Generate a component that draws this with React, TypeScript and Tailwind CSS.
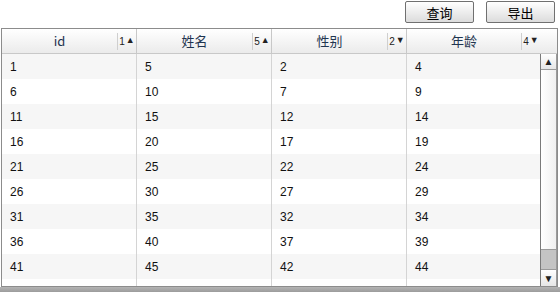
const columns = [
  { label: 'id', sort: '1', dir: '▲' },
  { label: '姓名', sort: '5', dir: '▲' },
  { label: '性别', sort: '2', dir: '▼' },
  { label: '年龄', sort: '4', dir: '▼' },
];

const rows = Array.from({ length: 9 }, (_, i) => [1, 5, 2, 4].map(n => n + i * 5));

const colWidths = ['w-[135px]', 'w-[135px]', 'w-[135px]', 'w-[133px]'];

function ToolButton({ label }: { label: string }) {
  return (
    <button className="w-[69px] h-[22px] rounded-[2px] border border-[#707070] bg-gradient-to-b from-white to-[#dcdcdc] text-[13px] leading-none text-black font-['Noto_Sans_CJK_SC',sans-serif]">
      {label}
    </button>
  );
}

export default function App() {
  return (
    <div className="w-[560px] h-[292px] bg-white flex flex-col font-['Liberation_Sans','Noto_Sans_CJK_SC',sans-serif]">
      {/* Toolbar */}
      <div className="h-[28px] flex justify-end items-start pt-[1px] pr-[5px] gap-[12px]">
        <ToolButton label="查询" />
        <ToolButton label="导出" />
      </div>

      {/* Grid */}
      <div className="ml-[1px] w-[557px] h-[259px] border border-[#8c8c8c] flex flex-col">
        {/* Header */}
        <div className="h-[25px] flex border-b border-[#c8c8c8] bg-gradient-to-b from-white to-[#ebebeb]">
          {columns.map((c, i) => (
            <div
              key={c.label}
              className={`${colWidths[i]} flex items-center ${i < 3 ? 'border-r border-[#c8c8c8]' : ''}`}
            >
              <div className="flex-1 text-center text-[13px] text-[#1f3550] font-['Noto_Sans_CJK_SC',sans-serif]">
                {c.label}
              </div>
              <div className="w-[19px] h-[17px] border-l border-[#cfcfcf] flex items-center justify-center gap-[1px] text-[10px] text-[#222]">
                <span>{c.sort}</span>
                <span className="text-[9px]">{c.dir}</span>
              </div>
            </div>
          ))}
          <div className="flex-1" />
        </div>

        {/* Body */}
        <div className="flex-1 flex">
          <div className="flex-1 flex flex-col">
            {rows.map((r, ri) => (
              <div key={ri} className={`h-[25px] flex ${ri % 2 === 0 ? 'bg-[#f6f6f6]' : 'bg-white'}`}>
                {r.map((v, ci) => (
                  <div
                    key={ci}
                    className={`${colWidths[ci]} pl-[8px] flex items-center text-[12px] text-[#111] ${ci < 3 ? 'border-r border-[#d4d4d4]' : ''}`}
                  >
                    {v}
                  </div>
                ))}
              </div>
            ))}
            <div className="flex-1 flex">
              {colWidths.map((w, ci) => (
                <div key={ci} className={`${w} ${ci < 3 ? 'border-r border-[#d4d4d4]' : ''}`} />
              ))}
            </div>
          </div>

          {/* Scrollbar */}
          <div className="w-[17px] flex flex-col border-l border-[#7a7a7a] border-r border-r-[#9a9a9a] bg-white">
            <div className="h-[16px] border-b border-[#9a9a9a] bg-gradient-to-b from-white to-[#e6e6e6] flex items-center justify-center text-[10px] text-[#222]">
              ▲
            </div>
            <div className="flex-1 flex flex-col justify-end bg-gradient-to-r from-white to-[#f0f0f0]">
              <div className="h-[20px] bg-[#c4c4c4] border-t border-[#9a9a9a]" />
            </div>
            <div className="h-[17px] border-t border-[#9a9a9a] bg-gradient-to-b from-white to-[#e6e6e6] flex items-center justify-center text-[10px] text-[#222]">
              ▼
            </div>
          </div>
        </div>
      </div>

      {/* Bottom frame */}
      <div className="flex-1 bg-gradient-to-b from-[#b4b4b4] to-[#9c9c9c]" />
    </div>
  );
}
